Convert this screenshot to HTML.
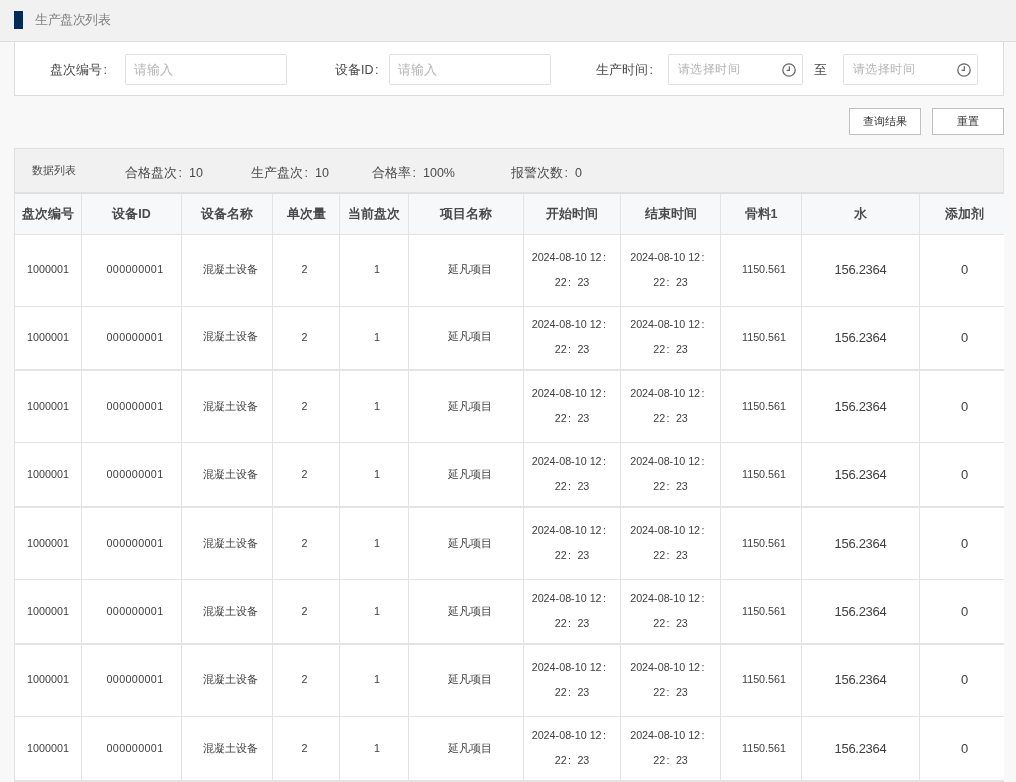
<!DOCTYPE html><html><head><meta charset="utf-8"><style>
*{margin:0;padding:0;box-sizing:border-box}
html,body{width:1016px;height:782px;overflow:hidden;background:#f8f8f8;font-family:"Liberation Sans", sans-serif;position:relative}
.a{position:absolute}
.wrap{position:absolute;left:0;top:0;width:1016px;height:782px;will-change:transform;background:#f8f8f8}
.hdr{left:0;top:0;width:1016px;height:42px;background:#f1f1f1;border-bottom:1px solid #dedede}
.mk{left:14px;top:11px;width:9px;height:18px;background:#022a56}
.ttl{left:35px;top:11px;font-size:12.5px;letter-spacing:-.4px;line-height:19px;color:#828282;white-space:nowrap}
.panel{left:14px;top:42px;width:990px;height:54px;background:#fff;border:1px solid #dcdcdc;border-top:none}
.lbl{font-size:12.5px;line-height:18px;color:#4a4a4a;white-space:nowrap}
.inp{height:31px;background:#fff;border:1px solid #dfdfdf;border-radius:1.5px}
.ph{font-size:12.5px;line-height:18px;color:#b4b4b4;white-space:nowrap}
.btn{height:27px;width:72px;background:#fff;border:1px solid #c0c0c0;border-radius:0;font-size:11px;line-height:25px;text-align:center;color:#333}
.stat{left:14px;top:148px;width:990px;height:46px;background:#f1f1f1;border:1px solid #e0e0e0;border-bottom:2px solid #e0e0e0}
.st{font-size:12.5px;line-height:18px;color:#4a4a4a;white-space:nowrap}
.tbl{left:14px;top:194px;width:990px;height:588px;overflow:hidden;background:#fff}
.c{display:inline-block;width:1em;text-align:left;padding-left:.12em}
.th{background:#f7f8fa}
.vl{background:#e3e3e3;width:1px}
.hl{background:#e3e3e3;height:1px}
.ht{font-size:12.5px;font-weight:bold;color:#4a4a4a;text-align:center;white-space:nowrap}
.ct{font-size:10.75px;color:#404040;text-align:center;white-space:nowrap;display:flex;align-items:center;justify-content:center}
</style></head><body><div class="wrap"><div class="a hdr"></div><div class="a mk"></div><div class="a ttl">生产盘次列表</div>
<div class="a panel"></div>
<div class="a lbl" style="left:50px;top:60.5px">盘次编号<span class="c">:</span></div>
<div class="a inp" style="left:125px;top:54px;width:162px"></div>
<div class="a ph" style="left:134px;top:60.5px">请输入</div>
<div class="a lbl" style="left:335px;top:60.5px">设备ID<span class="c">:</span></div>
<div class="a inp" style="left:389px;top:54px;width:162px"></div>
<div class="a ph" style="left:398px;top:60.5px">请输入</div>
<div class="a lbl" style="left:596px;top:60.5px">生产时间<span class="c">:</span></div>
<div class="a inp" style="left:668px;top:54px;width:135px"></div>
<div class="a ph" style="left:678px;top:59.5px;font-size:12px;letter-spacing:.4px">请选择时间</div>
<div class="a" style="left:782px;top:63px;width:14px;height:14px"><svg width="14" height="14" viewBox="0 0 14 14"><circle cx="7" cy="7" r="6.2" fill="none" stroke="#666" stroke-width="1.25"/><path d="M7.3 3.2V7.3H4.6" fill="none" stroke="#666" stroke-width="1.25"/></svg></div>
<div class="a inp" style="left:843px;top:54px;width:135px"></div>
<div class="a ph" style="left:853px;top:59.5px;font-size:12px;letter-spacing:.4px">请选择时间</div>
<div class="a" style="left:957px;top:63px;width:14px;height:14px"><svg width="14" height="14" viewBox="0 0 14 14"><circle cx="7" cy="7" r="6.2" fill="none" stroke="#666" stroke-width="1.25"/><path d="M7.3 3.2V7.3H4.6" fill="none" stroke="#666" stroke-width="1.25"/></svg></div>
<div class="a lbl" style="left:814px;top:60.5px">至</div>
<div class="a btn" style="left:849px;top:108px">查询结果</div>
<div class="a btn" style="left:932px;top:108px">重置</div>
<div class="a stat"></div>
<div class="a" style="left:32px;top:162px;font-size:10.75px;line-height:16px;color:#4a4a4a">数据列表</div>
<div class="a st" style="left:125px;top:164px">合格盘次<span class="c" style="width:.96em">:</span>10</div>
<div class="a st" style="left:251px;top:164px">生产盘次<span class="c" style="width:.96em">:</span>10</div>
<div class="a st" style="left:372px;top:164px">合格率<span class="c" style="width:.96em">:</span>100%</div>
<div class="a st" style="left:511px;top:164px">报警次数<span class="c" style="width:.96em">:</span>0</div>
<div class="a tbl"><div class="a th" style="left:0;top:0;width:1000px;height:40px"></div><div class="a hl" style="left:0;top:40px;width:1000px"></div><div class="a hl" style="left:0;top:112px;width:1000px;height:1px"></div><div class="a hl" style="left:0;top:175px;width:1000px;height:2px"></div><div class="a hl" style="left:0;top:248px;width:1000px;height:1px"></div><div class="a hl" style="left:0;top:312px;width:1000px;height:2px"></div><div class="a hl" style="left:0;top:385px;width:1000px;height:1px"></div><div class="a hl" style="left:0;top:449px;width:1000px;height:2px"></div><div class="a hl" style="left:0;top:522px;width:1000px;height:1px"></div><div class="a hl" style="left:0;top:586px;width:1000px;height:2px"></div><div class="a vl" style="left:0px;top:0;height:588px"></div><div class="a vl" style="left:67px;top:0;height:588px"></div><div class="a vl" style="left:167px;top:0;height:588px"></div><div class="a vl" style="left:258px;top:0;height:588px"></div><div class="a vl" style="left:325px;top:0;height:588px"></div><div class="a vl" style="left:394px;top:0;height:588px"></div><div class="a vl" style="left:509px;top:0;height:588px"></div><div class="a vl" style="left:606px;top:0;height:588px"></div><div class="a vl" style="left:706px;top:0;height:588px"></div><div class="a vl" style="left:787px;top:0;height:588px"></div><div class="a vl" style="left:905px;top:0;height:588px"></div><div class="a vl" style="left:995px;top:0;height:588px"></div><div class="a ht" style="left:1px;top:0.3px;width:66px;height:40px;line-height:40px">盘次编号</div><div class="a ht" style="left:68px;top:0.3px;width:99px;height:40px;line-height:40px">设备ID</div><div class="a ht" style="left:168px;top:0.3px;width:90px;height:40px;line-height:40px">设备名称</div><div class="a ht" style="left:259px;top:0.3px;width:66px;height:40px;line-height:40px">单次量</div><div class="a ht" style="left:326px;top:0.3px;width:68px;height:40px;line-height:40px">当前盘次</div><div class="a ht" style="left:395px;top:0.3px;width:114px;height:40px;line-height:40px">项目名称</div><div class="a ht" style="left:510px;top:0.3px;width:96px;height:40px;line-height:40px">开始时间</div><div class="a ht" style="left:607px;top:0.3px;width:99px;height:40px;line-height:40px">结束时间</div><div class="a ht" style="left:707px;top:0.3px;width:80px;height:40px;line-height:40px">骨料1</div><div class="a ht" style="left:788px;top:0.3px;width:117px;height:40px;line-height:40px">水</div><div class="a ht" style="left:906px;top:0.3px;width:89px;height:40px;line-height:40px">添加剂</div><div class="a ct" style="left:1px;top:39.5px;width:66px;height:71px;letter-spacing:0px;">1000001</div><div class="a ct" style="left:71.5px;top:39.5px;width:99px;height:71px;letter-spacing:.35px;">000000001</div><div class="a ct" style="left:171.8px;top:40px;width:90px;height:71px;">混凝土设备</div><div class="a ct" style="left:257.5px;top:39.5px;width:66px;height:71px;">2</div><div class="a ct" style="left:329px;top:39.5px;width:68px;height:71px;">1</div><div class="a ct" style="left:399.2px;top:40px;width:114px;height:71px;">延凡项目</div><div class="a ct" style="left:510px;top:40px;width:96px;height:71px;"><div style="line-height:25px;text-align:center">2024-08-10 12<span class="c">:</span><br>22<span class="c">:</span>23</div></div><div class="a ct" style="left:607px;top:40px;width:99px;height:71px;"><div style="line-height:25px;text-align:center">2024-08-10 12<span class="c">:</span><br>22<span class="c">:</span>23</div></div><div class="a ct" style="left:710px;top:39.5px;width:80px;height:71px;">1150.561</div><div class="a ct" style="left:788px;top:40px;width:117px;height:71px;font-size:13px;letter-spacing:-.3px;">156.2364</div><div class="a ct" style="left:906px;top:40px;width:89px;height:71px;font-size:13px;">0</div><div class="a ct" style="left:1px;top:111.5px;width:66px;height:62px;letter-spacing:0px;">1000001</div><div class="a ct" style="left:71.5px;top:111.5px;width:99px;height:62px;letter-spacing:.35px;">000000001</div><div class="a ct" style="left:171.8px;top:112px;width:90px;height:62px;">混凝土设备</div><div class="a ct" style="left:257.5px;top:111.5px;width:66px;height:62px;">2</div><div class="a ct" style="left:329px;top:111.5px;width:68px;height:62px;">1</div><div class="a ct" style="left:399.2px;top:112px;width:114px;height:62px;">延凡项目</div><div class="a ct" style="left:510px;top:112px;width:96px;height:62px;"><div style="line-height:25px;text-align:center">2024-08-10 12<span class="c">:</span><br>22<span class="c">:</span>23</div></div><div class="a ct" style="left:607px;top:112px;width:99px;height:62px;"><div style="line-height:25px;text-align:center">2024-08-10 12<span class="c">:</span><br>22<span class="c">:</span>23</div></div><div class="a ct" style="left:710px;top:111.5px;width:80px;height:62px;">1150.561</div><div class="a ct" style="left:788px;top:112px;width:117px;height:62px;font-size:13px;letter-spacing:-.3px;">156.2364</div><div class="a ct" style="left:906px;top:112px;width:89px;height:62px;font-size:13px;">0</div><div class="a ct" style="left:1px;top:176.5px;width:66px;height:71px;letter-spacing:0px;">1000001</div><div class="a ct" style="left:71.5px;top:176.5px;width:99px;height:71px;letter-spacing:.35px;">000000001</div><div class="a ct" style="left:171.8px;top:177px;width:90px;height:71px;">混凝土设备</div><div class="a ct" style="left:257.5px;top:176.5px;width:66px;height:71px;">2</div><div class="a ct" style="left:329px;top:176.5px;width:68px;height:71px;">1</div><div class="a ct" style="left:399.2px;top:177px;width:114px;height:71px;">延凡项目</div><div class="a ct" style="left:510px;top:176px;width:96px;height:71px;"><div style="line-height:25px;text-align:center">2024-08-10 12<span class="c">:</span><br>22<span class="c">:</span>23</div></div><div class="a ct" style="left:607px;top:176px;width:99px;height:71px;"><div style="line-height:25px;text-align:center">2024-08-10 12<span class="c">:</span><br>22<span class="c">:</span>23</div></div><div class="a ct" style="left:710px;top:176.5px;width:80px;height:71px;">1150.561</div><div class="a ct" style="left:788px;top:177px;width:117px;height:71px;font-size:13px;letter-spacing:-.3px;">156.2364</div><div class="a ct" style="left:906px;top:177px;width:89px;height:71px;font-size:13px;">0</div><div class="a ct" style="left:1px;top:248.5px;width:66px;height:63px;letter-spacing:0px;">1000001</div><div class="a ct" style="left:71.5px;top:248.5px;width:99px;height:63px;letter-spacing:.35px;">000000001</div><div class="a ct" style="left:171.8px;top:249px;width:90px;height:63px;">混凝土设备</div><div class="a ct" style="left:257.5px;top:248.5px;width:66px;height:63px;">2</div><div class="a ct" style="left:329px;top:248.5px;width:68px;height:63px;">1</div><div class="a ct" style="left:399.2px;top:249px;width:114px;height:63px;">延凡项目</div><div class="a ct" style="left:510px;top:248px;width:96px;height:63px;"><div style="line-height:25px;text-align:center">2024-08-10 12<span class="c">:</span><br>22<span class="c">:</span>23</div></div><div class="a ct" style="left:607px;top:248px;width:99px;height:63px;"><div style="line-height:25px;text-align:center">2024-08-10 12<span class="c">:</span><br>22<span class="c">:</span>23</div></div><div class="a ct" style="left:710px;top:248.5px;width:80px;height:63px;">1150.561</div><div class="a ct" style="left:788px;top:249px;width:117px;height:63px;font-size:13px;letter-spacing:-.3px;">156.2364</div><div class="a ct" style="left:906px;top:249px;width:89px;height:63px;font-size:13px;">0</div><div class="a ct" style="left:1px;top:313.5px;width:66px;height:71px;letter-spacing:0px;">1000001</div><div class="a ct" style="left:71.5px;top:313.5px;width:99px;height:71px;letter-spacing:.35px;">000000001</div><div class="a ct" style="left:171.8px;top:314px;width:90px;height:71px;">混凝土设备</div><div class="a ct" style="left:257.5px;top:313.5px;width:66px;height:71px;">2</div><div class="a ct" style="left:329px;top:313.5px;width:68px;height:71px;">1</div><div class="a ct" style="left:399.2px;top:314px;width:114px;height:71px;">延凡项目</div><div class="a ct" style="left:510px;top:313px;width:96px;height:71px;"><div style="line-height:25px;text-align:center">2024-08-10 12<span class="c">:</span><br>22<span class="c">:</span>23</div></div><div class="a ct" style="left:607px;top:313px;width:99px;height:71px;"><div style="line-height:25px;text-align:center">2024-08-10 12<span class="c">:</span><br>22<span class="c">:</span>23</div></div><div class="a ct" style="left:710px;top:313.5px;width:80px;height:71px;">1150.561</div><div class="a ct" style="left:788px;top:314px;width:117px;height:71px;font-size:13px;letter-spacing:-.3px;">156.2364</div><div class="a ct" style="left:906px;top:314px;width:89px;height:71px;font-size:13px;">0</div><div class="a ct" style="left:1px;top:385.5px;width:66px;height:63px;letter-spacing:0px;">1000001</div><div class="a ct" style="left:71.5px;top:385.5px;width:99px;height:63px;letter-spacing:.35px;">000000001</div><div class="a ct" style="left:171.8px;top:386px;width:90px;height:63px;">混凝土设备</div><div class="a ct" style="left:257.5px;top:385.5px;width:66px;height:63px;">2</div><div class="a ct" style="left:329px;top:385.5px;width:68px;height:63px;">1</div><div class="a ct" style="left:399.2px;top:386px;width:114px;height:63px;">延凡项目</div><div class="a ct" style="left:510px;top:385px;width:96px;height:63px;"><div style="line-height:25px;text-align:center">2024-08-10 12<span class="c">:</span><br>22<span class="c">:</span>23</div></div><div class="a ct" style="left:607px;top:385px;width:99px;height:63px;"><div style="line-height:25px;text-align:center">2024-08-10 12<span class="c">:</span><br>22<span class="c">:</span>23</div></div><div class="a ct" style="left:710px;top:385.5px;width:80px;height:63px;">1150.561</div><div class="a ct" style="left:788px;top:386px;width:117px;height:63px;font-size:13px;letter-spacing:-.3px;">156.2364</div><div class="a ct" style="left:906px;top:386px;width:89px;height:63px;font-size:13px;">0</div><div class="a ct" style="left:1px;top:449.5px;width:66px;height:71px;letter-spacing:0px;">1000001</div><div class="a ct" style="left:71.5px;top:449.5px;width:99px;height:71px;letter-spacing:.35px;">000000001</div><div class="a ct" style="left:171.8px;top:450px;width:90px;height:71px;">混凝土设备</div><div class="a ct" style="left:257.5px;top:449.5px;width:66px;height:71px;">2</div><div class="a ct" style="left:329px;top:449.5px;width:68px;height:71px;">1</div><div class="a ct" style="left:399.2px;top:450px;width:114px;height:71px;">延凡项目</div><div class="a ct" style="left:510px;top:450px;width:96px;height:71px;"><div style="line-height:25px;text-align:center">2024-08-10 12<span class="c">:</span><br>22<span class="c">:</span>23</div></div><div class="a ct" style="left:607px;top:450px;width:99px;height:71px;"><div style="line-height:25px;text-align:center">2024-08-10 12<span class="c">:</span><br>22<span class="c">:</span>23</div></div><div class="a ct" style="left:710px;top:449.5px;width:80px;height:71px;">1150.561</div><div class="a ct" style="left:788px;top:450px;width:117px;height:71px;font-size:13px;letter-spacing:-.3px;">156.2364</div><div class="a ct" style="left:906px;top:450px;width:89px;height:71px;font-size:13px;">0</div><div class="a ct" style="left:1px;top:522.5px;width:66px;height:63px;letter-spacing:0px;">1000001</div><div class="a ct" style="left:71.5px;top:522.5px;width:99px;height:63px;letter-spacing:.35px;">000000001</div><div class="a ct" style="left:171.8px;top:523px;width:90px;height:63px;">混凝土设备</div><div class="a ct" style="left:257.5px;top:522.5px;width:66px;height:63px;">2</div><div class="a ct" style="left:329px;top:522.5px;width:68px;height:63px;">1</div><div class="a ct" style="left:399.2px;top:523px;width:114px;height:63px;">延凡项目</div><div class="a ct" style="left:510px;top:522px;width:96px;height:63px;"><div style="line-height:25px;text-align:center">2024-08-10 12<span class="c">:</span><br>22<span class="c">:</span>23</div></div><div class="a ct" style="left:607px;top:522px;width:99px;height:63px;"><div style="line-height:25px;text-align:center">2024-08-10 12<span class="c">:</span><br>22<span class="c">:</span>23</div></div><div class="a ct" style="left:710px;top:522.5px;width:80px;height:63px;">1150.561</div><div class="a ct" style="left:788px;top:523px;width:117px;height:63px;font-size:13px;letter-spacing:-.3px;">156.2364</div><div class="a ct" style="left:906px;top:523px;width:89px;height:63px;font-size:13px;">0</div></div></div></body></html>
